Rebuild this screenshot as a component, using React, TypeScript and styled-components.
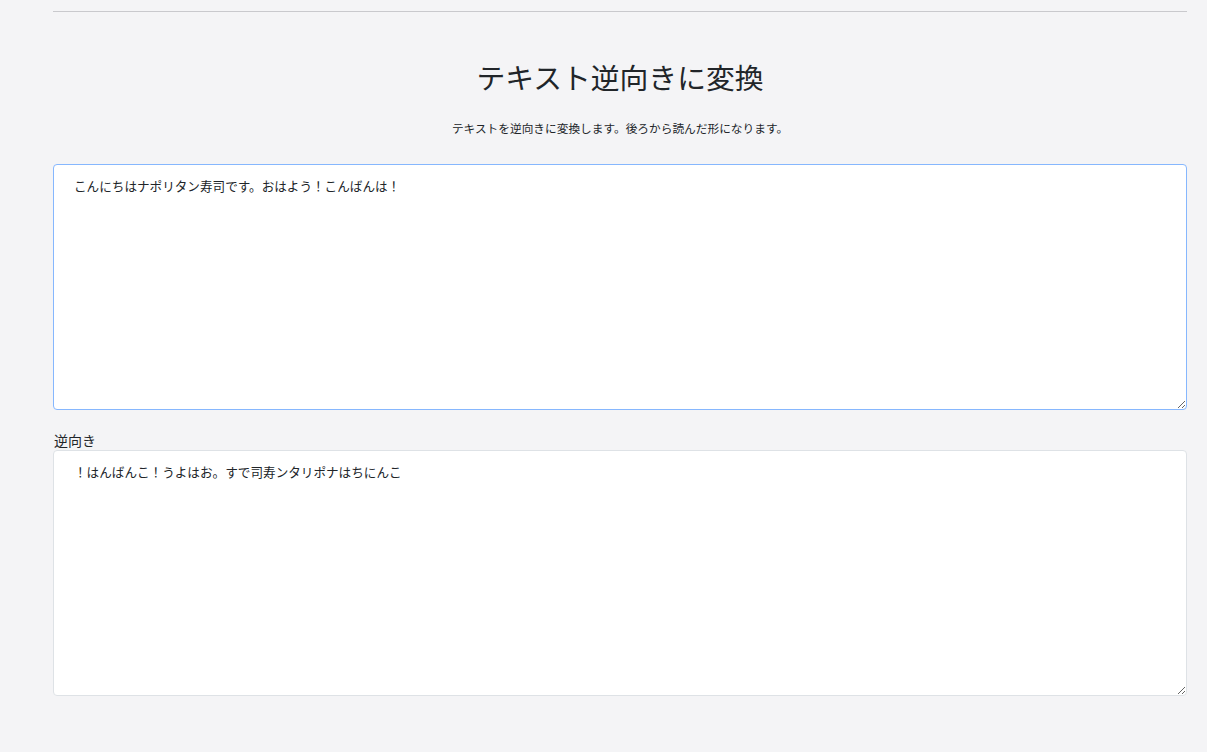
import * as React from 'react';
import styled, { createGlobalStyle } from 'styled-components';

const SOURCE = 'こんにちはナポリタン寿司です。おはよう！こんばんは！';

const reverseText = (text: string) => Array.from(text).reverse().join('');

const GlobalStyle = createGlobalStyle`
  html, body {
    margin: 0;
    padding: 0;
    background: #f4f4f6;
    color: #212529;
    font-family: 'Noto Sans CJK JP', 'Noto Sans', sans-serif;
  }
`;

export default function App() {
  const [text, setText] = React.useState(SOURCE);

  return (
    <>
      <GlobalStyle />
      <Wrapper>
        <Rule />
        <Title>テキスト逆向きに変換</Title>
        <Lead>テキストを逆向きに変換します。後ろから読んだ形になります。</Lead>
        <TextBox
          data-focused
          value={text}
          onChange={e => setText(e.target.value)}
        />
        <Label htmlFor="reversed">逆向き</Label>
        <TextBox id="reversed" readOnly value={reverseText(text)} />
      </Wrapper>
    </>
  );
}

const Wrapper = styled.main`
  box-sizing: border-box;
  width: 100%;
  padding: 0 20px 0 53px;
  max-width: 1207px;
  display: flex;
  flex-direction: column;
`;

const Rule = styled.hr`
  width: 100%;
  margin: 11px 0 0;
  border: 0;
  border-top: 1px solid #c9c9cd;
`;

const Title = styled.h1`
  margin: 48px 0 0;
  text-align: center;
  font-size: 28.8px;
  font-weight: 400;
  line-height: 1.2;
`;

const Lead = styled.p`
  margin: 24px 0 0;
  text-align: center;
  font-size: 11.7px;
  line-height: 1.5;
`;

const TextBox = styled.textarea`
  box-sizing: border-box;
  display: block;
  width: 100%;
  height: 246px;
  margin: 0;
  padding: 12px 20px;
  border: 1px solid ${props => (props['data-focused'] ? '#86b7fe' : '#dee2e6')};
  border-radius: 4px;
  background: #fff;
  color: #212529;
  font-family: 'Noto Sans CJK JP', 'Noto Sans', sans-serif;
  font-size: 12.6px;
  line-height: 1.5;
  outline: none;

  &:first-of-type {
    margin-top: 28px;
  }
`;

const Label = styled.label`
  display: block;
  margin: 20px 0 0 1px;
  font-size: 14px;
  line-height: 20px;
`;
